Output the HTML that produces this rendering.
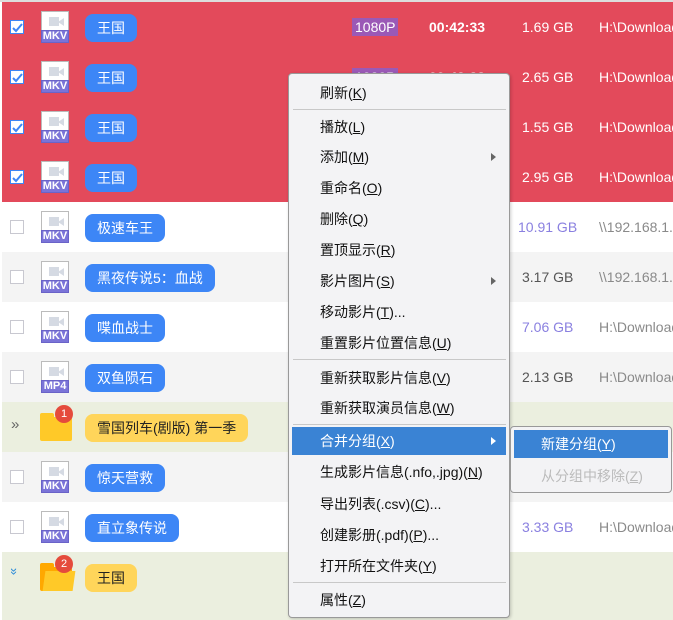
<!DOCTYPE html>
<html><head><meta charset="utf-8"><style>
*{margin:0;padding:0;box-sizing:border-box}
body{width:673px;height:620px;overflow:hidden;background:#fff;font-family:"Liberation Sans","Noto Sans CJK SC",sans-serif;position:relative}
.row{position:absolute;left:2px;width:671px;height:50px}
.red{background:#e34a5b}
.w{background:#fff}.g{background:#f4f4f4}.gr{background:#ebefdf}
.cb{position:absolute;left:8px;top:18px;width:14px;height:14px;border:1px solid #c8c8d0;background:#fff}
.red .cb{border-color:#3d86f6}
.cb svg{position:absolute;left:1px;top:1px}
.fi{position:absolute;left:39px;top:9px;width:28px;height:32px;border:1px solid #bbb;background:#fff}
.fi .cam{position:absolute;left:7px;top:5px;width:10px;height:9px;background:#d5dae3}
.fi .cam2{position:absolute;left:16px;top:5px;border-right:6px solid #d5dae3;border-top:4px solid transparent;border-bottom:4px solid transparent;width:0;height:0;margin-top:1px}
.fi .lbl{position:absolute;left:-1px;right:-1px;bottom:-1px;height:13px;background:#7b74d8;border:1px solid #6a63c8;color:#fff;font-size:11px;font-weight:bold;text-align:center;line-height:11px}
.pill{position:absolute;left:83px;top:12px;height:28px;border-radius:8px;background:#3d86f6;color:#fff;font-size:14px;line-height:28px;padding:0 12px}
.ypill{background:#ffd55a;color:#222}
.res{position:absolute;left:350px;top:16px;background:#9b59b6;color:#fff;font-size:14px;padding:0 3px;line-height:18px}
.dur{position:absolute;left:427px;top:15px;color:#fff;font-weight:bold;font-size:14px;line-height:20px}
.sz{position:absolute;left:520px;top:15px;font-size:14px;line-height:20px;color:#fff}
.pa{position:absolute;left:597px;top:15px;font-size:14px;line-height:20px;color:#fff;white-space:nowrap}
.pu{color:#8a80e0}.dk{color:#555}.gy{color:#8a8a8a}
.menu{position:absolute;left:288px;top:73px;width:222px;height:545px;background:#f3f3f5;border:1px solid #999;border-radius:4px;box-shadow:1px 1px 3px rgba(0,0,0,.2)}
.mi{position:absolute;left:3px;width:214px;height:28px;font-size:14px;line-height:28px;padding-left:28px;color:#111}
.sep{position:absolute;left:4px;width:213px;height:1px;background:#c8c8c8}
.hl{background:#3a83d4;color:#fff}
.arr{position:absolute;right:10px;top:10px;border-left:5px solid #666;border-top:4px solid transparent;border-bottom:4px solid transparent}
.hl .arr{border-left-color:#fff}
.sub{position:absolute;left:510px;top:426px;width:162px;height:67px;background:#f3f3f5;border:1px solid #999;border-radius:4px}
u{text-decoration:underline}
.badge{position:absolute;width:18px;height:18px;border-radius:50%;background:#e54b3c;color:#fff;font-size:11px;text-align:center;line-height:18px}
</style></head><body>
<div style="position:absolute;left:0;top:0;width:673px;height:2px;background:#ddd"></div>

<div class="row red" style="top:2px"><div class="cb"><svg width="11" height="11"><path d="M1 6 L4 9 L10 2" stroke="#3d86f6" stroke-width="2" fill="none"/></svg></div><div class="fi"><div class="cam"></div><div class="cam2"></div><div class="lbl">MKV</div></div><div class="pill">王国</div><div class="res">1080P</div><div class="dur">00:42:33</div><div class="sz">1.69 GB</div><div class="pa">H:\Downloads</div></div>
<div class="row red" style="top:52px"><div class="cb"><svg width="11" height="11"><path d="M1 6 L4 9 L10 2" stroke="#3d86f6" stroke-width="2" fill="none"/></svg></div><div class="fi"><div class="cam"></div><div class="cam2"></div><div class="lbl">MKV</div></div><div class="pill">王国</div><div class="res">1080P</div><div class="dur">00:42:33</div><div class="sz">2.65 GB</div><div class="pa">H:\Downloads</div></div>
<div class="row red" style="top:102px"><div class="cb"><svg width="11" height="11"><path d="M1 6 L4 9 L10 2" stroke="#3d86f6" stroke-width="2" fill="none"/></svg></div><div class="fi"><div class="cam"></div><div class="cam2"></div><div class="lbl">MKV</div></div><div class="pill">王国</div><div class="sz">1.55 GB</div><div class="pa">H:\Downloads</div></div>
<div class="row red" style="top:152px"><div class="cb"><svg width="11" height="11"><path d="M1 6 L4 9 L10 2" stroke="#3d86f6" stroke-width="2" fill="none"/></svg></div><div class="fi"><div class="cam"></div><div class="cam2"></div><div class="lbl">MKV</div></div><div class="pill">王国</div><div class="sz">2.95 GB</div><div class="pa">H:\Downloads</div></div>
<div class="row w" style="top:202px"><div class="cb"></div><div class="fi"><div class="cam"></div><div class="cam2"></div><div class="lbl">MKV</div></div><div class="pill">极速车王</div><div class="sz pu" style="left:516px">10.91 GB</div><div class="pa gy">\\192.168.1.1</div></div>
<div class="row g" style="top:252px"><div class="cb"></div><div class="fi"><div class="cam"></div><div class="cam2"></div><div class="lbl">MKV</div></div><div class="pill">黑夜传说5：血战</div><div class="sz dk">3.17 GB</div><div class="pa gy">\\192.168.1.1</div></div>
<div class="row w" style="top:302px"><div class="cb"></div><div class="fi"><div class="cam"></div><div class="cam2"></div><div class="lbl">MKV</div></div><div class="pill">喋血战士</div><div class="sz pu">7.06 GB</div><div class="pa gy">H:\Downloads</div></div>
<div class="row g" style="top:352px"><div class="cb"></div><div class="fi"><div class="cam"></div><div class="cam2"></div><div class="lbl">MP4</div></div><div class="pill">双鱼陨石</div><div class="sz dk">2.13 GB</div><div class="pa gy">H:\Downloads</div></div>
<div class="row gr" style="top:402px"><div style="position:absolute;left:9px;top:14px;font-size:15px;color:#666">»</div><div style="position:absolute;left:38px;top:15px;width:32px;height:24px;background:#ffc928;border-radius:2px"><div style="position:absolute;left:0;top:-4px;width:14px;height:6px;background:#ffc928;border-radius:2px 2px 0 0"></div><div class="badge" style="left:15px;top:-12px">1</div></div><div class="pill ypill">雪国列车(剧版) 第一季</div></div>
<div class="row g" style="top:452px"><div class="cb"></div><div class="fi"><div class="cam"></div><div class="cam2"></div><div class="lbl">MKV</div></div><div class="pill">惊天营救</div></div>
<div class="row w" style="top:502px"><div class="cb"></div><div class="fi"><div class="cam"></div><div class="cam2"></div><div class="lbl">MKV</div></div><div class="pill">直立象传说</div><div class="sz pu">3.33 GB</div><div class="pa gy">H:\Downloads</div></div>
<div class="row gr" style="top:552px;height:68px"><div style="position:absolute;left:9px;top:12px;font-size:13px;color:#2a8ad8;transform:rotate(90deg)">»</div><div style="position:absolute;left:38px;top:15px;width:32px;height:24px;background:#ffa800;border-radius:2px"><div style="position:absolute;left:0;top:-4px;width:14px;height:6px;background:#ffa800;border-radius:2px 2px 0 0"></div><div style="position:absolute;left:4px;top:4px;width:30px;height:20px;background:#ffc928;transform:skewX(-8deg)"></div><div class="badge" style="left:15px;top:-12px">2</div></div><div class="pill ypill">王国</div></div>

<div class="menu">
<div class="mi" style="top:5px">刷新(<u>K</u>)</div>
<div class="sep" style="top:35px"></div>
<div class="mi" style="top:39px">播放(<u>L</u>)</div>
<div class="mi" style="top:69px">添加(<u>M</u>)<span class="arr"></span></div>
<div class="mi" style="top:100px">重命名(<u>O</u>)</div>
<div class="mi" style="top:131px">删除(<u>Q</u>)</div>
<div class="mi" style="top:162px">置顶显示(<u>R</u>)</div>
<div class="mi" style="top:193px">影片图片(<u>S</u>)<span class="arr"></span></div>
<div class="mi" style="top:224px">移动影片(<u>T</u>)...</div>
<div class="mi" style="top:255px">重置影片位置信息(<u>U</u>)</div>
<div class="sep" style="top:285px"></div>
<div class="mi" style="top:290px">重新获取影片信息(<u>V</u>)</div>
<div class="mi" style="top:320px">重新获取演员信息(<u>W</u>)</div>
<div class="sep" style="top:350px"></div>
<div class="mi hl" style="top:353px">合并分组(<u>X</u>)<span class="arr"></span></div>
<div class="mi" style="top:384px">生成影片信息(.nfo,.jpg)(<u>N</u>)</div>
<div class="mi" style="top:416px">导出列表(.csv)(<u>C</u>)...</div>
<div class="mi" style="top:447px">创建影册(.pdf)(<u>P</u>)...</div>
<div class="mi" style="top:478px">打开所在文件夹(<u>Y</u>)</div>
<div class="sep" style="top:508px"></div>
<div class="mi" style="top:512px">属性(<u>Z</u>)</div>
</div>
<div class="sub">
<div class="mi hl" style="left:3px;top:3px;width:154px;padding-left:27px">新建分组(<u>Y</u>)</div>
<div class="mi" style="left:3px;top:35px;width:154px;padding-left:27px;color:#bbb">从分组中移除(<u>Z</u>)</div>
</div>
</body></html>
